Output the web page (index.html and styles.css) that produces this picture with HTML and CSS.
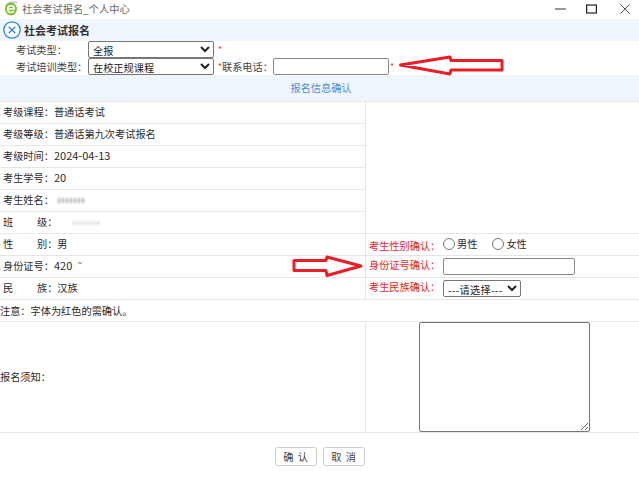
FILE: index.html
```html
<!DOCTYPE html>
<html lang="zh-CN">
<head>
<meta charset="utf-8">
<title>社会考试报名_个人中心</title>
<link rel="stylesheet" href="styles.css">
</head>
<body>
<div class="titlebar">
  <svg class="app-icon" width="14" height="15" viewBox="0 0 14 15"><ellipse cx="7" cy="8" rx="6" ry="6.500" fill="#7cc22e"/><path d="M1 4.500C4 1 10 .5 13 1.500" fill="none" stroke="#a9a9a9" stroke-width="1"/><path d="M4 8h6.200C10.200 6 9 4.800 7.100 4.800S3.700 6.200 3.700 8.200s1.500 3.200 3.400 3.200c1.300 0 2.300-.5 3-1.300" fill="none" stroke="#fff" stroke-width="1.600"/></svg>
  <span class="title-text">社会考试报名_个人中心</span>
  <div class="win-controls">
    <svg width="11" height="10" viewBox="0 0 11 10"><path d="M0 5h11" stroke="#555" stroke-width="1.200"/></svg>
    <svg width="11" height="10" viewBox="0 0 11 10"><rect x=".6" y="1" width="9.800" height="8" fill="none" stroke="#222" stroke-width="1.200"/></svg>
    <svg class="win-close" width="10" height="10" viewBox="0 0 10 10"><path d="M.5.500l9 9M9.500.500l-9 9" stroke="#555" stroke-width="1"/></svg>
  </div>
</div>
<div class="head-band">
  <svg width="18" height="18" viewBox="0 0 18 18"><circle cx="9" cy="9" r="8.200" fill="#fff" stroke="#2f86e0" stroke-width="1.300"/><path d="M5.700 5.700l6.600 6.600M12.300 5.700l-6.600 6.600" stroke="#2f86e0" stroke-width="1.300"/></svg>
  <span class="head-title">社会考试报名</span>
</div>
<div class="form-row">
  <label class="form-label">考试类型：</label>
  <select class="sel-main"><option>全报</option></select>
  <span class="star">*</span>
</div>
<div class="form-row">
  <label class="form-label">考试培训类型：</label>
  <select class="sel-main"><option>在校正规课程</option></select>
  <span class="star">*</span><label class="phone-label">联系电话：</label>
  <input class="txt-phone" type="text">
  <span class="star star-tight">*</span>
</div>
<div class="section-band">报名信息确认</div>
<table class="info">
  <colgroup><col class="col-left"><col></colgroup>
  <tr><td class="left">考级课程：普通话考试</td><td rowspan="6" class="right"></td></tr>
  <tr><td class="left">考级等级：普通话第九次考试报名</td></tr>
  <tr><td class="left">考级时间：<span class="num">2024-04-13</span></td></tr>
  <tr><td class="left">考生学号：<span class="num">20</span></td></tr>
  <tr><td class="left">考生姓名：<span class="mask mask-name"></span></td></tr>
  <tr><td class="left">班<span class="gap"></span>级：<span class="mask mask-class"></span></td></tr>
  <tr><td class="left">性<span class="gap"></span>别：男</td>
    <td class="right"><span class="red">考生性别确认：</span><span class="radios"><input type="radio" name="sex"><span class="opt">男性</span><input type="radio" name="sex"><span>女性</span></span></td></tr>
  <tr><td class="left">身份证号：<span class="num">420</span><span class="tick">˜</span></td>
    <td class="right"><span class="red">身份证号确认：</span><input class="txt-id" type="text"></td></tr>
  <tr><td class="left">民<span class="gap"></span>族：汉族</td>
    <td class="right"><span class="red">考生民族确认：</span><select class="sel-nation"><option>---请选择---</option></select></td></tr>
  <tr><td colspan="2" class="note">注意：字体为红色的需确认。</td></tr>
  <tr class="notice"><td class="note">报名须知：</td><td class="right"><textarea class="notice-box"></textarea></td></tr>
</table>
<div class="actions">
  <button class="btn" type="button">确 认</button>
  <button class="btn" type="button">取 消</button>
</div>
<svg class="arrow arrow-a" width="106" height="21" viewBox="0 0 106 21"><path d="M2.500 10 52 2 53 5.500H104V15H53L52 19Z" fill="#fff" stroke="#ee1c25" stroke-width="3" stroke-linejoin="round"/></svg>
<svg class="arrow arrow-b" width="72" height="23" viewBox="0 0 72 23"><path d="M69 11 35 2 34 5.500H2V15.500H34L35 20.500Z" fill="#fff" stroke="#ee1c25" stroke-width="3" stroke-linejoin="round"/></svg>
</body>
</html>
```
FILE: styles.css
```css
* { box-sizing: border-box; }
html, body { margin: 0; height: 100%; overflow: hidden; }
body {
  position: relative;
  background: #fff;
  color: #2b2b2b;
  font-family: "Noto Sans CJK SC", "Liberation Sans", sans-serif;
  font-size: 10.2px;
  line-height: 14px;
}
.titlebar { height: 19px; display: flex; align-items: center; padding: 0 0 2px 4px; }
.app-icon { margin-right: 4px; }
.title-text { color: #666; }
.win-controls { margin-left: auto; display: flex; gap: 20px; padding-right: 9px; }
.win-close { margin-left: 3px; }
.head-band {
  height: 22px; display: flex; align-items: center; gap: 3px;
  background: #eef5fc; padding-left: 3px;
}
.head-title { font-size: 11px; font-weight: 700; color: #333; }
.form-row { height: 17px; display: flex; align-items: center; padding-left: 16px; }
.form-label { width: 72px; color: #444; }
.phone-label { color: #444; }
select, input[type=text], textarea { font-family: inherit; font-size: 10.2px; color: #222; margin: 0; }
.sel-main { width: 126px; height: 17px; padding: 0; background: #fff; border: 1px solid #767676; border-radius: 2px; }
.star { color: #f33; margin-left: 4px; width: 4px; font-size: 9px; }
.star-tight { margin-left: 1px; }
.txt-phone { width: 116px; height: 17px; border: 1px solid #8a8a8a; border-radius: 2px; padding: 0 2px; }
.section-band {
  height: 27px; padding-left: 3px; background: #eef5fc; color: #4a90d9;
  text-align: center; line-height: 26px; border-bottom: 1px solid #e8e8e8;
}
.info { width: 639px; table-layout: fixed; border-collapse: separate; border-spacing: 0; }
.col-left { width: 365px; }
.info td { height: 22px; padding: 0 0 0 3px; border-bottom: 1px solid #e6e6e6; white-space: nowrap; vertical-align: middle; }
.info td.left { padding-bottom: 2px; }
.info td.note { padding-left: 0; }
.info td.right { border-left: 1px solid #e6e6e6; padding-left: 3px; }
.gap { display: inline-block; width: 23.800px; }
.num { font-size: 11px; }
.red { color: #f01c1c; display: inline-block; width: 74px; }
.radios { display: inline-flex; align-items: center; }
.radios input { width: 12px; height: 12px; margin: 0 2px 0 0; }
.opt { margin-right: 15px; }
.txt-id { width: 132px; height: 17px; border: 1px solid #8a8a8a; border-radius: 2px; vertical-align: middle; }
.sel-nation { width: 78px; height: 17px; padding: 0; background: #fff; border: 1px solid #767676; border-radius: 2px; vertical-align: middle; letter-spacing: .3px; }
.tick { color: #777; margin-left: 6px; }
.mask { display: inline-block; vertical-align: middle; filter: blur(.8px);
  background: repeating-linear-gradient(90deg, #aaa 0 2px, transparent 2px 4px); }
.mask-name { width: 26px; height: 5px; margin-left: 4px; }
.mask-class { width: 28px; height: 4px; margin-left: 16px; opacity: .5; }
.info .notice td { height: 111px; }
.info .notice td.right { padding: 0 0 0 53px; vertical-align: top; }
.notice-box { display: block; width: 171px; height: 110px; border: 1px solid #767676; border-radius: 2px; resize: both; }
.actions { display: flex; gap: 6px; padding: 14px 0 0 275px; }
.btn {
  width: 42px; height: 19px; padding: 0; background: #fff; color: #444;
  border: 1px solid #ccc; border-radius: 3px; font-family: inherit; font-size: 10.2px; letter-spacing: 1px;
}
.arrow { position: absolute; display: block; }
.arrow-a { left: 398px; top: 55px; }
.arrow-b { left: 292px; top: 255px; }
```
